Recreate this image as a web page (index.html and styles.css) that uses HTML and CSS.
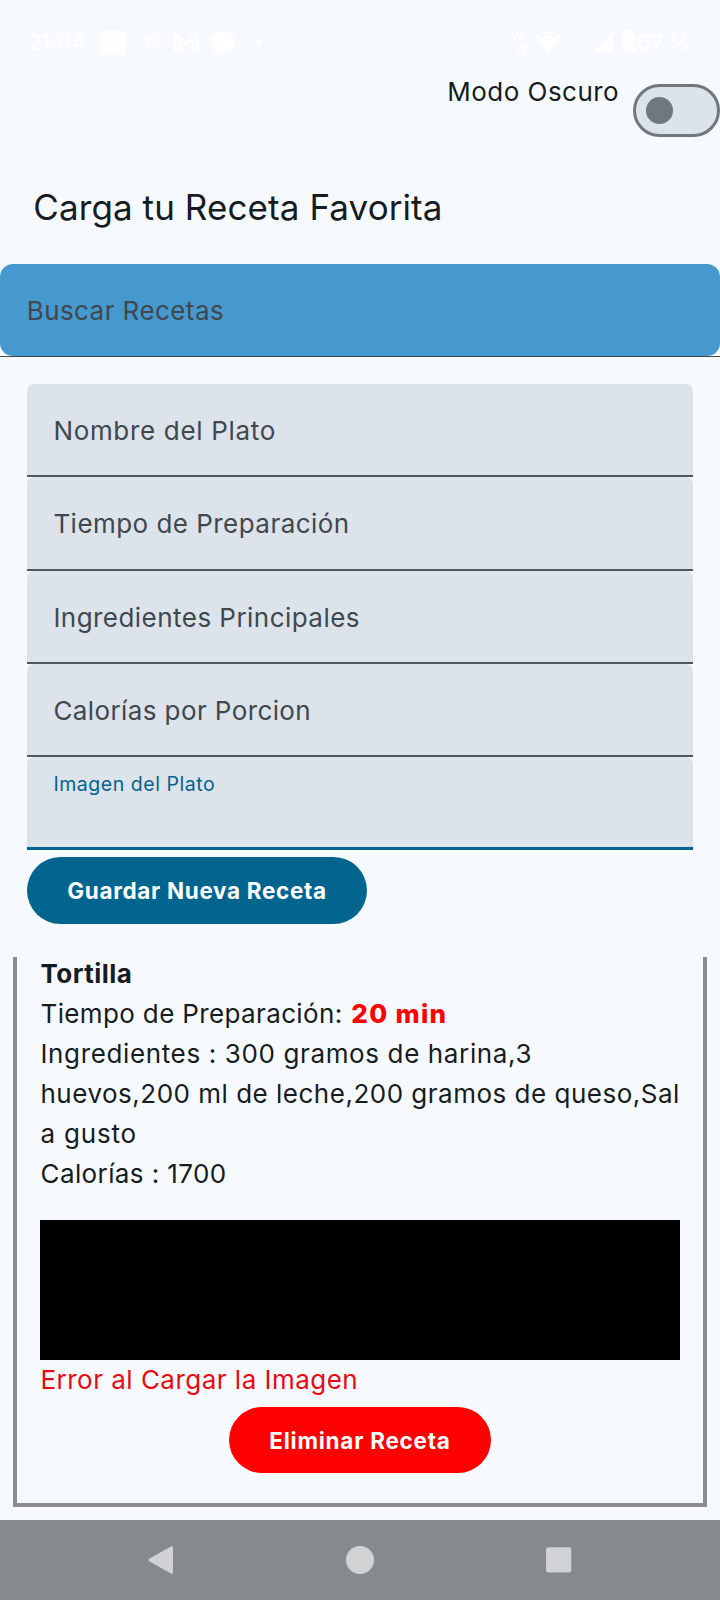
FILE: index.html
```html
<!DOCTYPE html>
<html lang="es">
<head>
<meta charset="utf-8">
<title>Recetas</title>
<link rel="stylesheet" href="styles.css">
</head>
<body>
<div class="screen">
  <header class="status">
    <div class="status-left">
      <span class="clock">21:04</span>
      <svg class="notifications" width="176" height="30" viewBox="0 0 176 30">
        <rect x="3" y="4" width="26" height="24" rx="2"/>
        <text class="temperature" x="47" y="21">25°</text>
        <path class="stroke" d="M79 24V7L90 17L101 7V24M84 24V11M96 24V11"/>
        <circle cx="127" cy="15.500" r="11.500"/>
        <circle cx="163" cy="15.500" r="3.500"/>
      </svg>
    </div>
    <div class="status-right">
      <svg width="126" height="30" viewBox="0 0 126 30">
        <text class="volte" x="0" y="13">Vo</text>
        <text class="volte" x="4" y="26">TE</text>
        <path d="M24 10Q37 -1 49 10L37 26Z"/>
        <path class="arc" d="M28 11Q37 4 45 11"/>
        <path d="M82 25L102 5V25Z"/>
        <path d="M112 6H115V3H121V6H124V26H112Z"/>
      </svg>
      <span class="battery">67 %</span>
    </div>
  </header>

  <div class="theme-row">
    <span class="theme-label">Modo Oscuro</span>
    <span class="switch"><span class="thumb"></span></span>
  </div>

  <h1 class="title">Carga tu Receta Favorita</h1>

  <div class="search"><span class="search-label">Buscar Recetas</span></div>

  <form class="form">
    <div class="field"><span class="label-name">Nombre del Plato</span></div>
    <div class="field"><span class="label-time">Tiempo de Preparación</span></div>
    <div class="field"><span class="label-ingredients">Ingredientes Principales</span></div>
    <div class="field"><span class="label-calories">Calorías por Porcion</span></div>
    <div class="field focused"><span class="floating-label">Imagen del Plato</span></div>
    <button type="button" class="button save">Guardar Nueva Receta</button>
  </form>

  <main class="list">
    <article class="card">
      <div class="line"><span class="name">Tortilla</span></div>
      <div class="line"><span class="time">Tiempo de Preparación:</span> <span class="minutes">20 min</span></div>
      <div class="line"><span class="ing-a">Ingredientes : 300 gramos de harina,3</span></div>
      <div class="line"><span class="ing-b">huevos,200 ml de leche,200 gramos de queso,Sal</span></div>
      <div class="line"><span class="ing-c">a gusto</span></div>
      <div class="line"><span class="calories">Calorías : 1700</span></div>
      <div class="photo"></div>
      <div class="line error">Error al Cargar la Imagen</div>
      <button type="button" class="button delete">Eliminar Receta</button>
    </article>
  </main>

  <nav class="nav">
    <svg width="720" height="80" viewBox="0 0 720 80">
      <path d="M149.500 38.500L171 26.500Q173 25.500 173 28V52Q173 54.500 171 53.500L149.500 41.500Q147 40 149.500 38.500Z"/>
      <circle cx="360" cy="40" r="14"/>
      <rect x="546" y="27.300" width="25.300" height="25.300" rx="2.500"/>
    </svg>
  </nav>
</div>
</body>
</html>
```
FILE: styles.css
```css
* { box-sizing: border-box; }
body {
  margin: 0;
  background: #f6faff;
  color: #171c20;
  font-family: Inter, sans-serif;
  font-size: 26px;
  line-height: 40px;
}
.screen {
  width: 720px;
  height: 1600px;
  display: flex;
  flex-direction: column;
  overflow: hidden;
}
span { white-space: nowrap; }

.status {
  height: 72px;
  padding: 12px 29px 0 28px;
  display: flex;
  justify-content: space-between;
  align-items: center;
  color: #fff;
  fill: #fff;
  flex: none;
}
.status-left, .status-right { display: flex; align-items: center; }
.clock { width: 68px; font-size: 22px; letter-spacing: 0.2px; }
.battery { font-size: 22px; font-weight: 600; }
.temperature { font-size: 14px; }
.volte { font-size: 10px; font-weight: 700; }
.stroke { fill: none; stroke: #fff; stroke-width: 3; }
.arc { fill: none; stroke: #f6faff; stroke-width: 2; }

.theme-row {
  height: 108px;
  display: flex;
  justify-content: flex-end;
  align-items: flex-start;
  flex: none;
}
.theme-label { width: 186px; letter-spacing: 0.47px; }
.switch {
  width: 86.700px;
  height: 53.300px;
  margin-top: 11.700px;
  padding-left: 10px;
  display: flex;
  align-items: center;
  border: 3.300px solid #70777d;
  border-radius: 27px;
  background: #dce3ea;
}
.thumb { width: 26.700px; height: 26.700px; border-radius: 50%; background: #70777d; }

.title {
  height: 84px;
  margin: 0;
  padding: 4px 0 0 33.300px;
  font-size: 35px;
  font-weight: 400;
  letter-spacing: 0.09px;
  line-height: 47px;
  flex: none;
}

.search {
  height: 93.300px;
  padding: 1px 0 0 26.700px;
  display: flex;
  align-items: center;
  color: #40484e;
  position: relative;
  z-index: 0;
  flex: none;
}
.search::before {
  content: "";
  position: absolute;
  inset: 0 0 1px;
  z-index: -1;
  border-radius: 13px;
  background: #4599cf;
}
.search::after {
  content: "";
  position: absolute;
  inset: auto 0 0;
  height: 1.700px;
  background: #40484e;
}
.search-label { letter-spacing: 0.43px; }

.form {
  height: 599.700px;
  padding: 26.700px 26.700px 0;
  flex: none;
}
.field {
  height: 93.300px;
  padding: 1px 0 0 26.700px;
  display: flex;
  align-items: center;
  border-radius: 6.700px 6.700px 0 0;
  color: #40484e;
  background: linear-gradient(#50585e, #50585e) bottom / 100% 2px no-repeat #dce3ea;
}
.label-name { letter-spacing: 0.68px; }
.label-time, .label-ingredients { letter-spacing: 0.46px; }
.label-calories { letter-spacing: 0.4px; }
.focused {
  align-items: flex-start;
  padding-top: 14px;
  color: #00658e;
  background: linear-gradient(#00658e, #00658e) bottom / 100% 3.500px no-repeat #dce3ea;
}
.floating-label { font-size: 19.500px; line-height: 27px; letter-spacing: 0.55px; }

.button {
  height: 66.700px;
  padding: 0;
  display: block;
  border: 0;
  border-radius: 34px;
  color: #fff;
  font: 700 22.500px/67.500px Inter, sans-serif;
  text-align: center;
}
.save { width: 340.600px; margin-top: 6.700px; background: #00658e; letter-spacing: 0.68px; }
.delete { width: 262.500px; margin: 6.700px auto 0; background: #f00; letter-spacing: 0.75px; }

.list {
  height: 563px;
  padding: 0 13px;
  flex: none;
  overflow: hidden;
}
.card {
  height: 553px;
  margin-top: -3px;
  padding: 0 23px;
  border: solid #8b8d8f;
  border-width: 0 4px 4px;
}
.line { height: 40px; padding-left: 0.500px; white-space: nowrap; }
.name { font-weight: 700; letter-spacing: 0.45px; }
.time { letter-spacing: 0.36px; }
.minutes { margin-left: 1.500px; color: #f00; font-weight: 800; letter-spacing: 1.3px; }
.ing-a { letter-spacing: 0.63px; }
.ing-b { letter-spacing: 0.5px; }
.ing-c { letter-spacing: 0.8px; }
.calories { letter-spacing: 0.4px; }
.photo { height: 140px; margin-top: 26px; background: #000; }
.error { color: #e50b12; letter-spacing: 0.48px; }

.nav { height: 80px; background: #858a8d; fill: #d0d2d4; flex: none; }
.nav svg { display: block; }
```
